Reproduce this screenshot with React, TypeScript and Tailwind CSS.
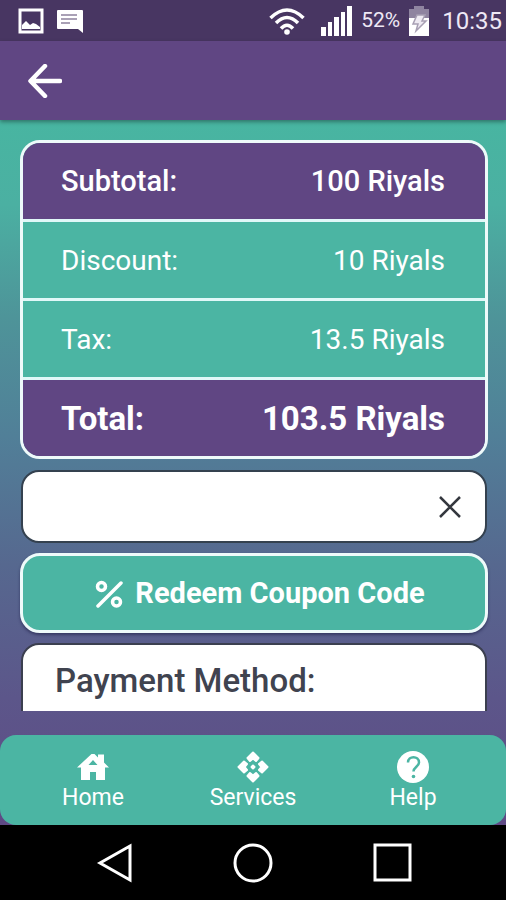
import { useState } from "react";

const rows = [
  { label: "Subtotal:", value: "100 Riyals", style: "bg-[#604683] text-[29px] font-medium" },
  { label: "Discount:", value: "10 Riyals", style: "bg-[#4bb5a3] text-[28px] font-normal" },
  { label: "Tax:", value: "13.5 Riyals", style: "bg-[#4bb5a3] text-[28px] font-normal" },
  { label: "Total:", value: "103.5 Riyals", style: "bg-[#604683] text-[33px] font-bold" },
];

function StatusBar() {
  return (
    <div className="flex h-[41px] shrink-0 items-center bg-[#483662] pr-1 pl-[18px] text-[#eee8f5]">
      <svg className="h-[26px] w-[26px]" viewBox="0 0 26 26" fill="none" aria-hidden="true">
        <rect x="2" y="2" width="22" height="22" stroke="white" strokeWidth="3" />
        <path d="M4 21v-4l4-4 4 4 3-2 3 1 4 3v2z" fill="white" />
      </svg>
      <svg className="ml-3 h-[26px] w-[28px]" viewBox="0 0 28 26" aria-hidden="true">
        <path d="M1 3q0-1 1-1h24q1 0 1 1v22l-5-4H2q-1 0-1-1z" fill="white" />
        <path d="M5 7h16M5 11h16M5 15h9" stroke="#a9a0b5" strokeWidth="2" />
      </svg>
      <div className="ml-auto flex items-center">
        <svg className="h-[28px] w-[36px]" viewBox="0 0 36 28" fill="none" stroke="white" strokeWidth="3.5" aria-hidden="true">
          <path d="M1.5 11Q18-5 34.500 11" />
          <path d="M7 16Q18 5 29 16M12 21.500Q18 15 24 21.500" />
          <circle cx="18" cy="25" r="2.800" fill="white" stroke="none" />
        </svg>
        <svg className="ml-4 h-[30px] w-[32px]" viewBox="0 0 32 30" fill="white" aria-hidden="true">
          <path d="M0 21h5v9H0zM7 16h4v14H7zM13 11h5v19h-5zM20 6h4v24h-4zM26 0h5v30h-5z" />
        </svg>
        <span className="ml-2 text-[21px] leading-none">52%</span>
        <svg className="ml-2 h-[32px] w-[22px]" viewBox="0 0 22 32" aria-hidden="true">
          <path d="M6 1h10v3h5v10H1V4h5z" fill="#8f84a0" />
          <path d="M1 13h20v18H1z" fill="white" />
          <path d="M9 10h8l-3 6h4L8 26l2-7H5z" fill="#eeeaf2" stroke="#a79fb3" strokeWidth="1.500" />
        </svg>
        <span className="ml-3 text-2xl leading-none">10:35</span>
      </div>
    </div>
  );
}

function HomeIcon() {
  return (
    <svg className="h-8 w-8" viewBox="0 0 32 32" fill="white" aria-hidden="true">
      <path fillRule="evenodd" d="M0 16.500 14.500 3h3l3.500 3.500V3.500h6v8l5 5H28V29h-9v-8h-6v8H4V16.500zM16 9l-4.500 5h9z" />
    </svg>
  );
}

function ServicesIcon() {
  return (
    <svg className="h-8 w-8" viewBox="0 0 32 32" fill="white" stroke="white" strokeWidth="2" strokeLinejoin="round" aria-hidden="true">
      <path id="arm" d="M16 1.500 10.500 7l2.500 3 3-2.500 3 2.500 2.500-3z" />
      <path d="M30.500 16 25 10.500l-3 2.500 2.500 3-2.500 3 3 2.500z" />
      <path d="m16 30.500 5.500-5.500-2.500-3-3 2.500-3-2.500-2.500 3z" />
      <path d="m1.500 16 5.500 5.500 3-2.500-2.500-3 2.500-3-3-2.500z" />
      <path d="m16 14.500 1.500 1.500-1.500 1.500-1.500-1.500z" />
    </svg>
  );
}

function HelpIcon() {
  return (
    <svg className="h-8 w-8" viewBox="0 0 32 32" fill="none" aria-hidden="true">
      <circle cx="16" cy="16" r="16" fill="white" />
      <path d="M11 11.500c0-7 11-7 11 0 0 4-5.500 4.500-5.500 9" stroke="#4bb5a3" strokeWidth="2.500" />
      <circle cx="16.500" cy="25.500" r="1.800" fill="#4bb5a3" />
    </svg>
  );
}

const tabs = [
  { label: "Home", icon: <HomeIcon /> },
  { label: "Services", icon: <ServicesIcon /> },
  { label: "Help", icon: <HelpIcon /> },
];

export default function App() {
  const [code, setCode] = useState("");

  return (
    <div className="flex h-screen flex-col overflow-hidden bg-black font-[Roboto,sans-serif] text-white">
      <StatusBar />
      <header className="z-10 flex h-[79px] shrink-0 items-center bg-[#604683] px-7 shadow-[0_2px_4px_rgba(0,0,0,0.35)]">
        <button type="button" aria-label="Back">
          <svg className="h-[34px] w-[34px]" viewBox="0 0 34 34" fill="none" stroke="white" strokeWidth="4.500" strokeLinecap="round" strokeLinejoin="round" aria-hidden="true">
            <path d="M17 2 2.500 17 17 32M3 17h29" />
          </svg>
        </button>
      </header>
      <div className="flex min-h-0 flex-1 flex-col bg-[linear-gradient(#48b5a1,#4bb0a2_12%,#4e9499_28%,#517f98_45%,#56688f_63%,#5c568a_82%,#5f4a85)]">
        <main className="mb-6 flex min-h-0 flex-1 flex-col overflow-hidden pt-5 pr-[18px] pl-5">
          <div className="shrink-0 overflow-hidden rounded-[20px] border-3 border-[#eefafa]">
            <table className="w-full border-separate border-spacing-0">
              <tbody>
                {rows.map((row) => (
                  <tr key={row.label} className={`group ${row.style}`}>
                    <th scope="row" className="h-[79px] border-b-3 border-[#e0f8f8] pt-0.5 pl-[38px] text-left [font-weight:inherit] group-last:h-[76px] group-last:border-b-0">
                      {row.label}
                    </th>
                    <td className="border-b-3 border-[#e0f8f8] pt-0.5 pr-10 text-right group-last:border-b-0">{row.value}</td>
                  </tr>
                ))}
              </tbody>
            </table>
          </div>

          <div className="mx-px mt-[11px] flex h-[73px] shrink-0 items-center rounded-[18px] border-2 border-[#34414f] bg-white pr-6">
            <input
              aria-label="Coupon code"
              className="h-full min-w-0 flex-1 bg-transparent pl-8 text-[29px] text-[#40444f] outline-none"
              value={code}
              onChange={(e) => setCode(e.target.value)}
            />
            <button type="button" aria-label="Clear" onClick={() => setCode("")}>
              <svg className="h-[22px] w-[22px]" viewBox="0 0 22 22" stroke="#34373e" strokeWidth="2.500" aria-hidden="true">
                <path d="m1 1 20 20M21 1 1 21" />
              </svg>
            </button>
          </div>

          <button
            type="button"
            className="mt-[10px] flex h-[80px] shrink-0 items-center justify-center gap-3 rounded-[20px] border-3 border-[#eefafa] bg-[#4bb5a3] pt-0.5 pl-3 text-[29px] font-bold shadow-[0_2px_3px_rgba(20,20,60,0.5)]"
          >
            <svg className="h-7 w-7" viewBox="0 0 28 28" fill="none" stroke="white" strokeWidth="3.500" aria-hidden="true">
              <path d="M3 26 26 3" strokeLinecap="round" />
              <circle cx="6.500" cy="6.500" r="4" />
              <circle cx="21.500" cy="22" r="4" />
            </svg>
            Redeem Coupon Code
          </button>

          <section className="mx-px mt-[10px] h-40 shrink-0 rounded-t-[18px] border-2 border-[#3b3f4f] bg-white px-8 pt-4">
            <h2 className="text-[33px] leading-10 font-medium text-[#40434f]">Payment Method:</h2>
          </section>
        </main>
        <nav className="flex h-[90px] shrink-0 justify-center rounded-[16px] bg-[#4bb5a3]">
          {tabs.map((tab) => (
            <a key={tab.label} href="#" className="flex w-40 flex-col items-center pt-4 text-[23px] leading-[30px]">
              {tab.icon}
              {tab.label}
            </a>
          ))}
        </nav>
      </div>
      <div className="flex h-[75px] shrink-0 items-center justify-center gap-[100px] bg-black">
        <button type="button" aria-label="System back">
          <svg className="h-10 w-10" viewBox="0 0 40 40" fill="none" stroke="white" strokeWidth="3" aria-hidden="true">
            <path d="M37 3v34L7 20z" />
          </svg>
        </button>
        <button type="button" aria-label="System home">
          <svg className="h-10 w-10" viewBox="0 0 40 40" fill="none" stroke="white" strokeWidth="3" aria-hidden="true">
            <circle cx="20" cy="20" r="18" />
          </svg>
        </button>
        <button type="button" aria-label="Recent apps">
          <svg className="h-10 w-10" viewBox="0 0 40 40" fill="none" stroke="white" strokeWidth="3" aria-hidden="true">
            <path d="M2 2h35v35H2z" />
          </svg>
        </button>
      </div>
    </div>
  );
}
